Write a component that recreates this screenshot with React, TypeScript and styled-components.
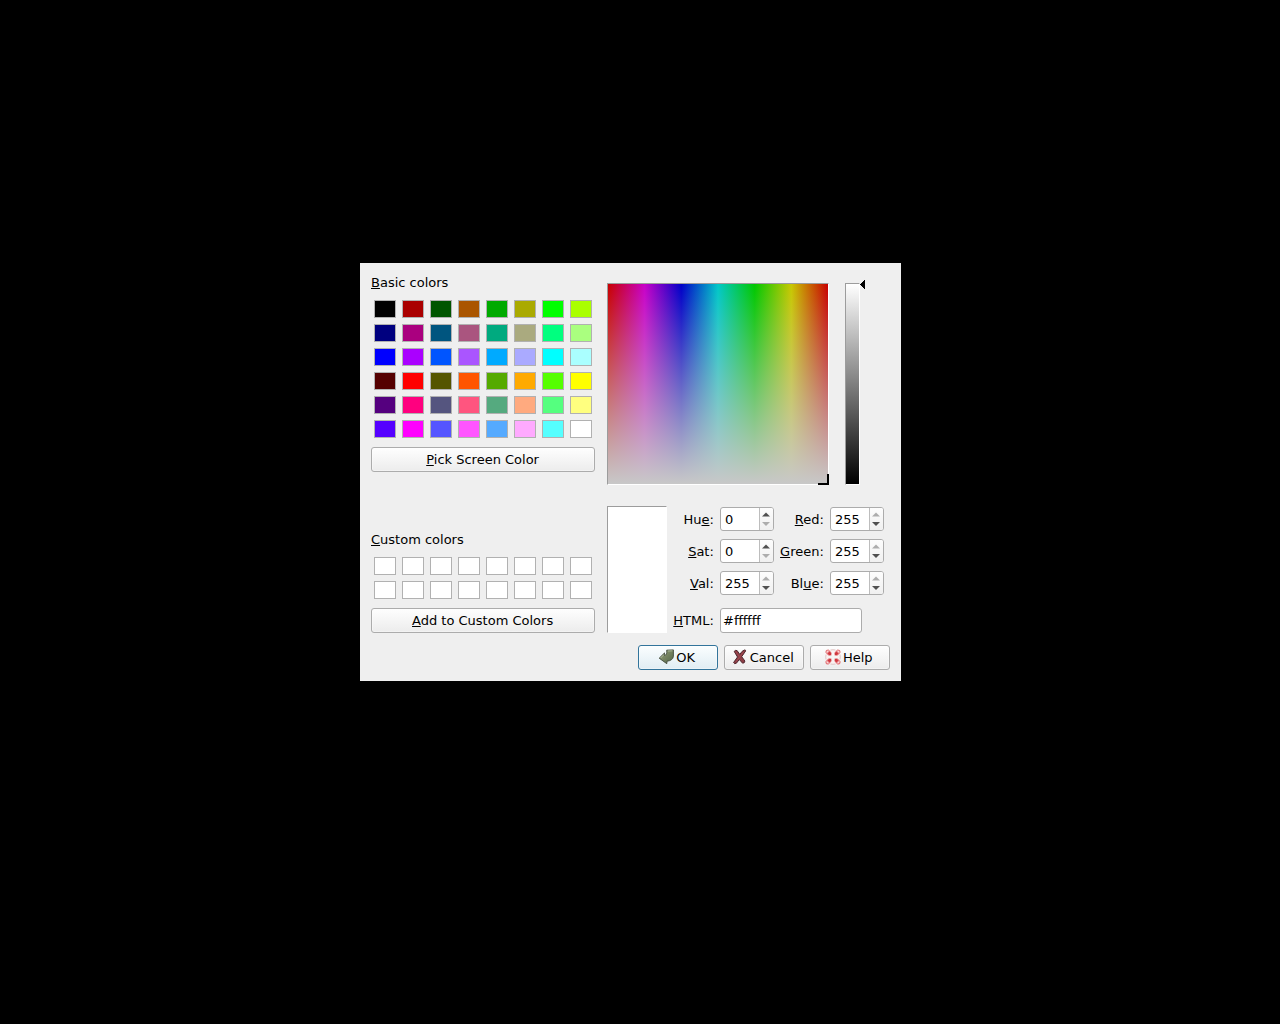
import React from "react";
import styled, { createGlobalStyle } from "styled-components";

const GlobalStyle = createGlobalStyle`
  html, body { margin: 0; background: #000; }
  body { overflow: hidden; }
  * { box-sizing: border-box; }
`;

const Screen = styled.div`
  width: 1280px;
  height: 1024px;
  padding: 263px 0 0 360px;
  background: #000;
  font: 13px/16px "DejaVu Sans", sans-serif;
  color: #000;
`;

const Dialog = styled.main`
  width: 541px;
  height: 418px;
  padding: 11px;
  background: #efefef;
  display: flex;
  flex-direction: column;
  justify-content: space-between;
`;

const Columns = styled.div`
  display: flex;
  gap: 12px;
  height: 359px;
`;

const Palette = styled.section`
  width: 224px;
  display: flex;
  flex-direction: column;
`;

const Caption = styled.div<{ $pushed?: boolean }>`
  height: 17px;
  padding-top: 1px;
  margin-top: ${(p) => (p.$pushed ? "auto" : "0")};
  white-space: nowrap;
`;

const Key = styled.span`
  text-decoration: underline;
  text-decoration-thickness: 1px;
  text-decoration-skip-ink: none;
  text-underline-offset: 1px;
`;

const Wells = styled.div`
  display: grid;
  grid-template-columns: repeat(8, 22px);
  grid-auto-rows: 18px;
  gap: 6px;
  padding: 3px;
  margin: 6px 0 6px;
`;

const Well = styled.div<{ $color: string }>`
  background: ${(p) => p.$color};
  border: 1px solid #b1b1b1;
`;

const Button = styled.button<{ $primary?: boolean; $wide?: boolean }>`
  display: flex;
  align-items: center;
  justify-content: center;
  width: ${(p) => (p.$wide ? "224px" : "80px")};
  height: 25px;
  padding: ${(p) => (p.$wide ? "1px 0.8px 0 0" : "1px 0.5px 0 0")};
  font: inherit;
  color: #000;
  white-space: nowrap;
  border: 1px solid ${(p) => (p.$primary ? "#32749b" : "#acacac")};
  border-radius: 3px;
  background: ${(p) =>
    p.$primary
      ? "linear-gradient(#fbfeff, #e0edf3)"
      : "linear-gradient(#fefefe, #ececec)"};
  box-shadow: inset 0 0 0 1px rgba(255, 255, 255, 0.35);
`;

const Mixer = styled.section`
  width: 283px;
  display: flex;
  flex-direction: column;
  justify-content: space-between;
`;

const PickerRow = styled.div`
  display: flex;
  padding-top: 9px;
`;

const Sunken = styled.div`
  border: 1px solid;
  border-color: #9c9c9c #fff #fff #9c9c9c;
`;

const HueField = styled(Sunken)`
  position: relative;
  width: 222px;
  height: 202px;
  margin-right: 16px;
  background:
    linear-gradient(rgba(200, 200, 200, 0), #c8c8c8) padding-box,
    linear-gradient(to right, #c80000, #c800c8, #0000c8, #00c8c8, #00c800, #c8c800, #c80000) padding-box;
`;

const Crosshair = styled.div`
  position: absolute;
  right: -1px;
  bottom: -1px;
  width: 11px;
  height: 11px;
  border: solid #000;
  border-width: 0 2px 2px 0;
`;

const ValueBar = styled(Sunken)`
  width: 15px;
  height: 202px;
  background: linear-gradient(#fff, #000) padding-box;
`;

const ValueArrow = styled.svg`
  width: 5px;
  height: 9px;
  margin-top: -3px;
`;

const Fields = styled.div`
  display: flex;
  gap: 6px;
`;

const Preview = styled(Sunken)`
  width: 60px;
  height: 127px;
  background: #fff;
`;

const Form = styled.div`
  display: grid;
  grid-template-columns: 41px 54px 44px 54px;
  grid-template-rows: 24px 24px 24px 30px;
  column-gap: 6px;
  row-gap: 8px;
  padding-top: 1px;
  align-items: center;
`;

const Label = styled.label`
  padding: 2px 0.15px 0 0;
  margin-left: -2px;
  text-align: right;
  white-space: nowrap;
`;

const Spin = styled.div`
  display: flex;
  height: 24px;
  border: 1px solid #acacac;
  border-radius: 3px;
  background: #fff;
  overflow: hidden;
`;

const SpinValue = styled.span`
  flex: 1;
  padding: 4px 0 0 4px;
`;

const Arrows = styled.svg`
  width: 14px;
  height: 22px;
  border-left: 1px solid #bdbdbd;
  background: linear-gradient(#fdfdfd, #f0f0f0);
`;

const HtmlInput = styled.div`
  grid-column: 2 / 5;
  align-self: end;
  width: 142px;
  height: 25px;
  padding: 4px 2px 3px;
  border: 1px solid #acacac;
  border-radius: 3px;
  background: #fff;
`;

const HtmlLabel = styled(Label)`
  align-self: end;
  padding-bottom: 4px;
`;

const Actions = styled.footer`
  display: flex;
  justify-content: flex-end;
  gap: 6px;
`;

const Icon = styled.svg`
  width: 16px;
  height: 16px;
  flex: none;
  margin: -2px 2px 0 -2px;
`;

const basic = [
  "#000000 #aa0000 #005500 #aa5500 #00aa00 #aaaa00 #00ff00 #aaff00",
  "#00007f #aa007f #00557f #aa557f #00aa7f #aaaa7f #00ff7f #aaff7f",
  "#0000ff #aa00ff #0055ff #aa55ff #00aaff #aaaaff #00ffff #aaffff",
  "#550000 #ff0000 #555500 #ff5500 #55aa00 #ffaa00 #55ff00 #ffff00",
  "#55007f #ff007f #55557f #ff557f #55aa7f #ffaa7f #55ff7f #ffff7f",
  "#5500ff #ff00ff #5555ff #ff55ff #55aaff #ffaaff #55ffff #ffffff",
].flatMap((row) => row.split(" "));

const custom = Array<string>(16).fill("#ffffff");

function Mnemonic({ text, at = 0 }: { text: string; at?: number }) {
  return (
    <span>
      {text.slice(0, at)}
      <Key>{text[at]}</Key>
      {text.slice(at + 1)}
    </span>
  );
}

function SpinBox({ value, max }: { value: number; max?: boolean }) {
  const up = max ? "#adadad" : "#505050";
  const down = value === 0 ? "#adadad" : "#505050";
  return (
    <Spin>
      <SpinValue>{value}</SpinValue>
      <Arrows viewBox="0 0 13 22">
        <path d="M2 8.5 6 4.5 10 8.5Z" fill={up} />
        <path d="M2 14 6 18 10 14Z" fill={down} />
      </Arrows>
    </Spin>
  );
}

function OkIcon() {
  return (
    <Icon viewBox="0 0 16 16">
      <defs>
        <linearGradient id="ok" x1="0" y1="0" x2="1" y2="1">
          <stop offset="0" stopColor="#98a683" />
          <stop offset="0.5" stopColor="#748260" />
          <stop offset="1" stopColor="#52664a" />
        </linearGradient>
      </defs>
      <path d="M8.7 1.2 15.4.9V7.5Q14.7 11.6 9 12.2L8.8 14.7 1.2 9.2 6.5 3.9V6.5Q9.4 6 8.7 1.2Z" fill="url(#ok)" stroke="#424b3b" strokeWidth=".9" strokeLinejoin="round" />
      <path d="M9.8 2 14.5 1.8M2.6 9 5.9 5.7" stroke="#b7c5a4" strokeWidth=".8" />
    </Icon>
  );
}

function CancelIcon() {
  return (
    <Icon viewBox="0 0 16 16">
      <path d="M2.2 2.4Q3.5.8 5.1 1.6L7.8 5.4Q10 1.6 12.4 1Q14 1 13.6 2L9.7 7.7 12.9 12Q12.8 14.2 10.6 14.2L7.3 10.5 4.4 14.2Q2.3 15.4 1.6 13.5L5.5 8Z" fill="#8d3d45" stroke="#4f2930" strokeWidth="1" strokeLinejoin="round" />
      <path d="M3.8 2.9 7.2 7.4M11.8 2.7 4 12.8" stroke="#a64b54" strokeWidth=".8" />
    </Icon>
  );
}

function HelpIcon() {
  return (
    <Icon viewBox="0 0 16 16">
      <circle cx="8" cy="8" r="5.8" fill="none" stroke="#faf1f1" strokeWidth="3" />
      <path d="M5.5 1Q8 .4 10.5 1M5.5 15Q8 15.6 10.5 15M1 5.5Q.4 8 1 10.5M15 5.5Q15.6 8 15 10.5" fill="none" stroke="#d9b2b2" strokeWidth=".7" />
      {[0, 90, 180, 270].map((angle) => (
        <g key={angle} transform={`rotate(${angle} 8 8)`}>
          <path d="M.4 3.6Q.3.3 3.6.4L6.4 3.4V6.4H3.4Z" fill="#e3777b" />
          <path d="M2.8 4.6 4.6 2.8 6.3 4.3 6 6 4.3 6.3Z" fill="#d0373f" />
          <path d="M1.6 3.5 3.5 1.6" stroke="#fbdcdc" strokeWidth="1.2" />
        </g>
      ))}
    </Icon>
  );
}

export default function App() {
  return (
    <Screen>
      <GlobalStyle />
      <Dialog>
        <Columns>
          <Palette>
            <Caption><Mnemonic text="Basic colors" /></Caption>
            <Wells>{basic.map((c) => <Well key={c} $color={c} />)}</Wells>
            <Button $wide><Mnemonic text="Pick Screen Color" /></Button>
            <Caption $pushed><Mnemonic text="Custom colors" /></Caption>
            <Wells>{custom.map((c, i) => <Well key={i} $color={c} />)}</Wells>
            <Button $wide><Mnemonic text="Add to Custom Colors" /></Button>
          </Palette>
          <Mixer>
            <PickerRow>
              <HueField><Crosshair /></HueField>
              <ValueBar />
              <ValueArrow viewBox="0 0 5 9" shapeRendering="crispEdges">
                <path d="M5 0V9L0 4.5Z" />
              </ValueArrow>
            </PickerRow>
            <Fields>
              <Preview />
              <Form>
                <Label><Mnemonic text="Hue:" at={2} /></Label>
                <SpinBox value={0} />
                <Label><Mnemonic text="Red:" /></Label>
                <SpinBox value={255} max />
                <Label><Mnemonic text="Sat:" /></Label>
                <SpinBox value={0} />
                <Label><Mnemonic text="Green:" /></Label>
                <SpinBox value={255} max />
                <Label><Mnemonic text="Val:" /></Label>
                <SpinBox value={255} max />
                <Label><Mnemonic text="Blue:" at={2} /></Label>
                <SpinBox value={255} max />
                <HtmlLabel><Mnemonic text="HTML:" /></HtmlLabel>
                <HtmlInput>#ffffff</HtmlInput>
              </Form>
            </Fields>
          </Mixer>
        </Columns>
        <Actions>
          <Button $primary><OkIcon />OK</Button>
          <Button><CancelIcon />Cancel</Button>
          <Button><HelpIcon />Help</Button>
        </Actions>
      </Dialog>
    </Screen>
  );
}
